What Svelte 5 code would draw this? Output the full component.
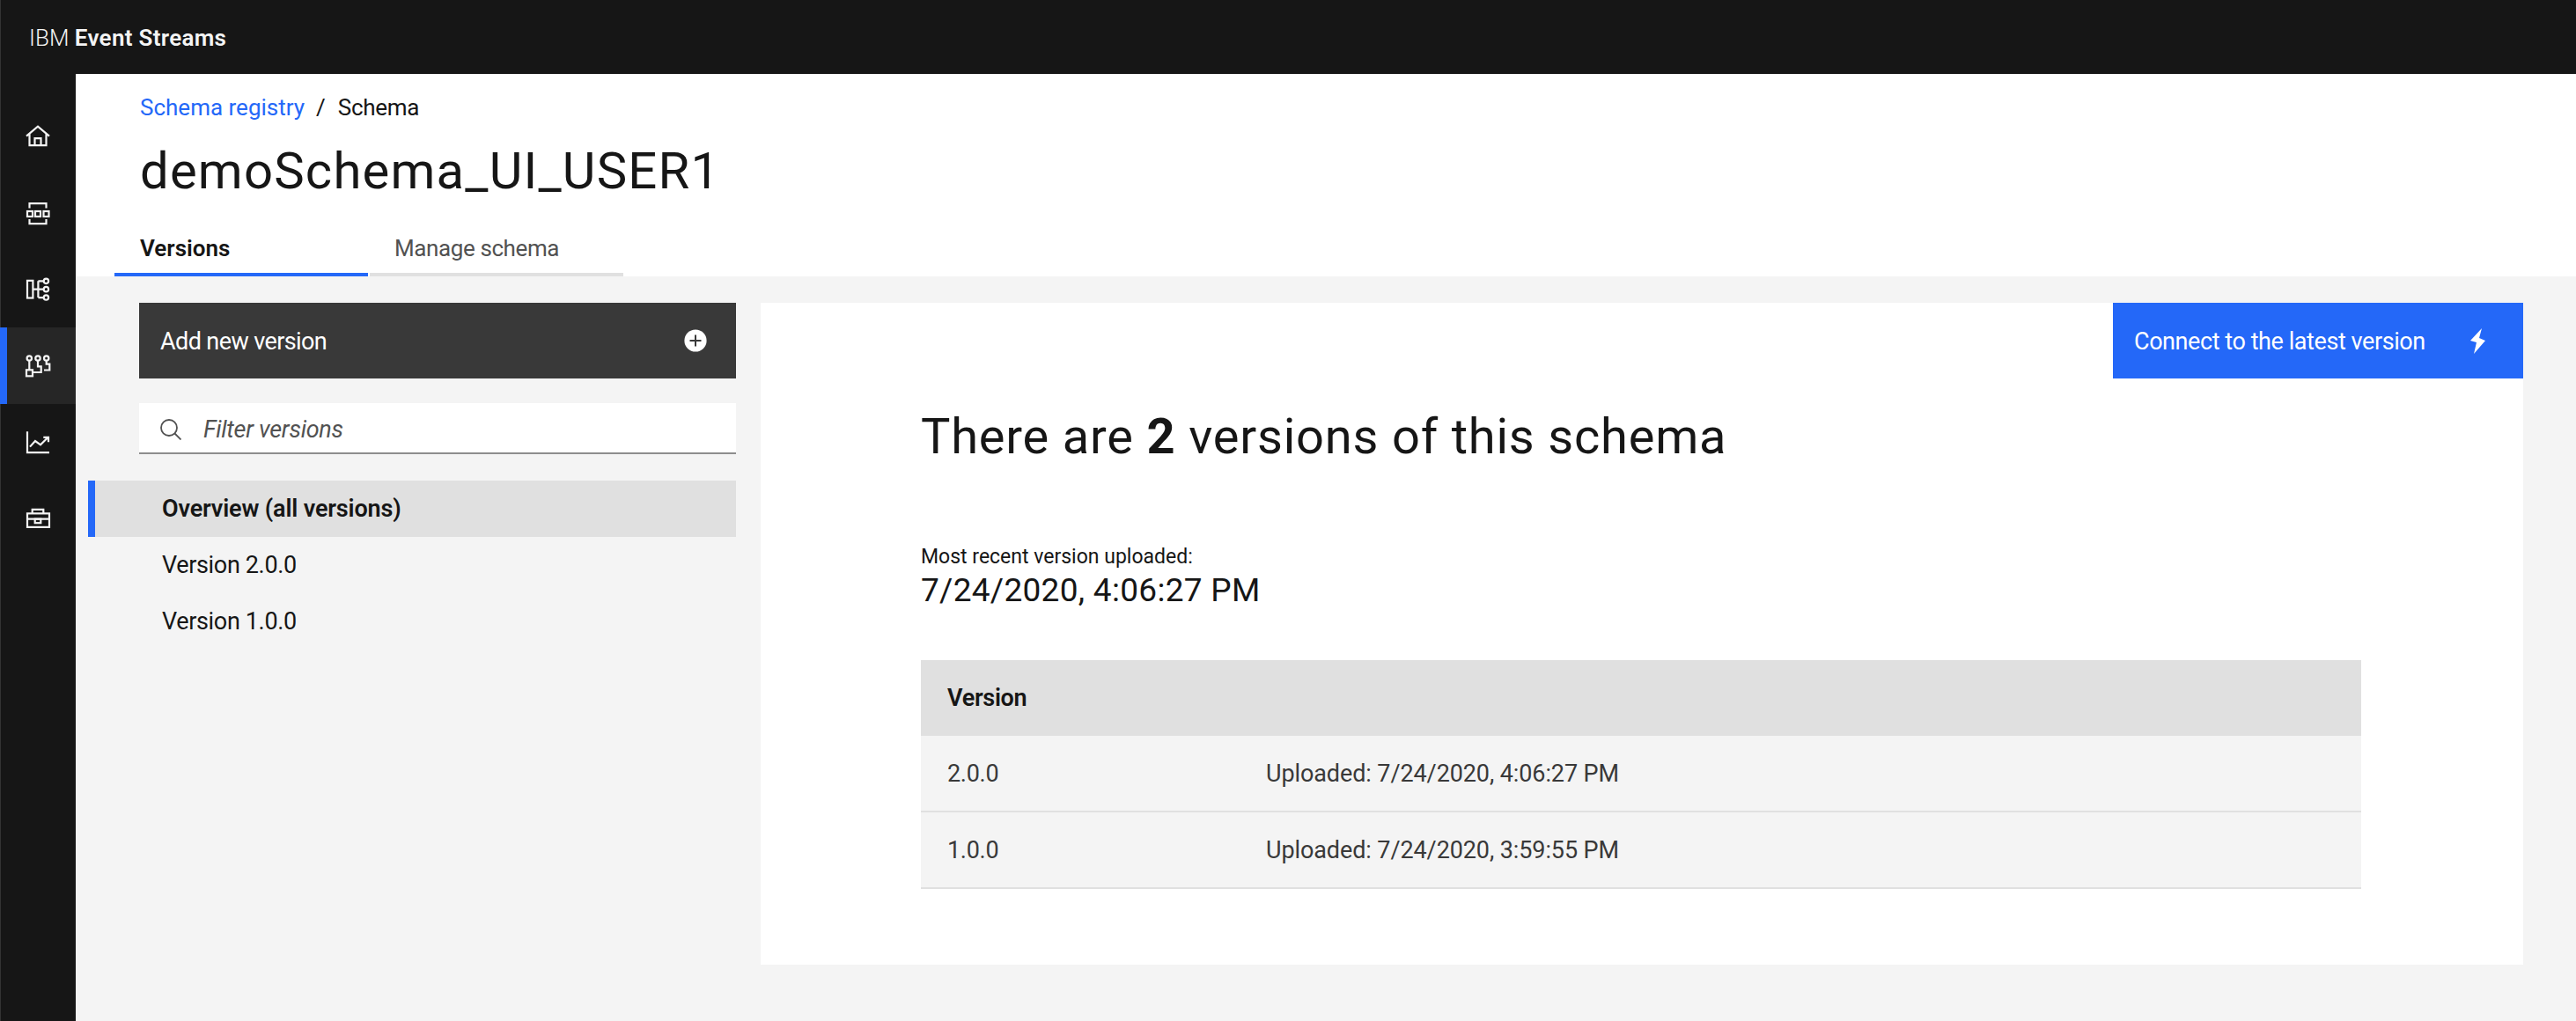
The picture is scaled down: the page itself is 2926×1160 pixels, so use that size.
<script>
  const rows = [
    { v: '2.0.0', u: 'Uploaded: 7/24/2020, 4:06:27 PM' },
    { v: '1.0.0', u: 'Uploaded: 7/24/2020, 3:59:55 PM' }
  ];
</script>

<div class="app">
  <header class="top"><span class="ibm">IBM</span> <span class="product">Event Streams</span></header>
  <div class="below">
    <nav class="side">
      <a class="item" aria-label="Home">
        <svg viewBox="0 2.33 46 46"><path d="M10 25 23 14 36 25M13.5 22.5V35.5H32.5V22.5M19.5 35.5V27.5H26.5V35.5"/></svg>
      </a>
      <a class="item" aria-label="Topics">
        <svg viewBox="0 -1 46 46"><path d="M13.5 16.5V11.2H32.5V16.5M13.5 29V34.2H32.5V29"/><rect x="11" y="20" width="6" height="6"/><rect x="20" y="20" width="6" height="6"/><rect x="29.5" y="20" width="6" height="6"/></svg>
      </a>
      <a class="item" aria-label="Consumer groups">
        <svg viewBox="0 .67 46 46"><rect x="11" y="13.5" width="6.4" height="19.7"/><path d="M17.4 23.3H29.7M23.4 14V32.7M23.4 14H29.7M23.4 32.7H29.7"/><circle cx="32.4" cy="14" r="2.7"/><circle cx="32.4" cy="23.3" r="2.7"/><circle cx="32.4" cy="32.7" r="2.7"/></svg>
      </a>
      <a class="item active" aria-label="Schema registry">
        <svg viewBox="0 0 46 46"><circle cx="13.3" cy="15" r="2.7"/><circle cx="23" cy="15" r="2.7"/><circle cx="32.7" cy="15" r="2.7"/><rect x="10" y="28.3" width="7" height="7"/><path d="M13.3 17.7V28.3M23 17.7V24.3H26.7V31H17M32.7 17.7V21.7H36.3V28.5H30"/></svg>
      </a>
      <a class="item" aria-label="Monitoring">
        <svg viewBox="0 -.33 46 46"><path d="M11 11V34.7H36M14 28.3 20 21.7 26 26 34.7 17.5M29.3 17.5H35V23"/></svg>
      </a>
      <a class="item" aria-label="Toolbox">
        <svg viewBox="0 .33 46 46"><rect x="11" y="17.7" width="25" height="15.5"/><path d="M16.7 17.7V13.2H29.3V17.7M11 24H36"/><rect x="19.7" y="24" width="6.6" height="4.5"/></svg>
      </a>
    </nav>

    <main class="page">
      <section class="head">
        <div class="crumbs"><a class="link">Schema registry</a><span class="sep">/</span><span class="here">Schema</span></div>
        <h1>demoSchema_UI_USER1</h1>
        <div class="tabs">
          <div class="tab on"><span class="tab-versions">Versions</span></div>
          <div class="tab"><span class="tab-manage">Manage schema</span></div>
        </div>
      </section>

      <section class="body">
        <aside class="left">
          <button class="add"><span>Add new version</span>
            <svg class="plus" viewBox="0 0 26 26"><circle cx="13" cy="13" r="12.6" fill="#fff"/><path d="M13 6.5V19.5M6.5 13H19.5" stroke="#393939" stroke-width="2" fill="none"/></svg>
          </button>
          <div class="filter">
            <svg class="glass" viewBox="0 0 24 24"><circle cx="10" cy="10" r="9" /><path d="M16.5 16.5 23.5 23.5"/></svg>
            <span>Filter versions</span>
          </div>
          <ul class="list">
            <li class="sel"><span class="ov">Overview (all versions)</span></li>
            <li><span class="ver">Version 2.0.0</span></li>
            <li><span class="ver">Version 1.0.0</span></li>
          </ul>
        </aside>

        <article class="card">
          <div class="card-top">
            <button class="connect"><span>Connect to the latest version</span>
              <svg class="bolt" viewBox="0 0 17 29"><path d="M13 0 0 14 7 16 4 29 17 14 10 11Z" fill="#fff"/></svg>
            </button>
          </div>
          <div class="content">
            <h2>There are <b>2</b> versions of this schema</h2>
            <p class="label">Most recent version uploaded:</p>
            <p class="date">7/24/2020, 4:06:27 PM</p>
            <div class="table">
              <div class="thead"><span class="th">Version</span></div>
              {#each rows as r}
                <div class="tr"><span class="c1">{r.v}</span><span class="c2">{r.u}</span></div>
              {/each}
            </div>
          </div>
        </article>
      </section>
    </main>
  </div>
</div>

<style>
  :global(body) { margin: 0; background: #f4f4f4; }
  .app { width: 2926px; min-height: 1160px; font-family: Roboto, sans-serif; color: #161616; display: flex; flex-direction: column; }
  .top { height: 84px; background: #161616; color: #f4f4f4; border-left: 1px solid #333; padding-left: 32px; font-size: 26px; line-height: 87px; white-space: pre; box-sizing: border-box; }
  .ibm { font-weight: 300; letter-spacing: 0; }
  .product { font-weight: 600; letter-spacing: 0.3px; }
  .below { display: flex; flex: 1; }
  .side { width: 86px; flex: none; background: #161616; border-left: 1px solid #333; box-sizing: border-box; padding-top: 28px; }
  .item { display: flex; align-items: center; justify-content: center; height: 86.67px; margin-left: -1px; width: 86px; }
  .item.active { background: #262626; box-shadow: inset 8px 0 0 #2468f8; }
  .item svg { width: 46px; height: 46px; fill: none; stroke: #f4f4f4; stroke-width: 2.2; }

  .page { flex: 1; min-width: 0; display: flex; flex-direction: column; }
  .head { background: #fff; height: 230px; position: relative; display: flex; flex-direction: column; padding-left: 73px; box-sizing: border-box; }
  .crumbs { font-size: 26px; line-height: 40px; margin-top: 18px; display: flex; align-items: baseline; letter-spacing: 0; }
  .link { color: #2468f8; }
  .sep { margin: 0 14px 0 13px; }
  .here { letter-spacing: -0.3px; }
  h1 { margin: 20px 0 0; font-size: 58px; font-weight: 400; line-height: 64px; letter-spacing: 1.2px; }
  .tabs { display: flex; gap: 2px; margin: auto 0 0 -29px; }
  .tab { width: 288px; height: 60px; box-sizing: border-box; border-bottom: 4px solid #e0e0e0; padding: 8px 0 0 28px; font-size: 26px; line-height: 40px; color: #525252; letter-spacing: -0.4px; }
  .tab.on { border-bottom-color: #2468f8; color: #161616; font-weight: 600; letter-spacing: 0; padding-left: 29px; }

  .body { flex: 1; display: flex; gap: 28px; padding: 30px 60px 0 14px; }
  .left { width: 736px; flex: none; }
  .add { display: flex; align-items: center; justify-content: space-between; width: 678px; height: 86px; margin-left: 58px; background: #393939; color: #fff; border: 0; padding: 2px 33px 0 24px; box-sizing: border-box; font: inherit; font-size: 27px; letter-spacing: -0.6px; }
  .plus { width: 26px; height: 26px; margin-top: -2px; }
  .filter { display: flex; align-items: center; width: 678px; height: 58px; margin: 28px 0 0 58px; padding: 3px 0 0 24px; box-sizing: border-box; background: #fff; border-bottom: 2px solid #8d8d8d; font-size: 27px; font-style: italic; color: #525252; letter-spacing: -0.3px; }
  .glass { width: 24px; height: 24px; margin-right: 25px; fill: none; stroke: #525252; stroke-width: 1.8; flex: none; }
  .list { list-style: none; margin: 30px 0 0; padding: 0; }
  .list li { height: 64px; line-height: 65px; padding-left: 84px; font-size: 27px; letter-spacing: -0.35px; }
  .list li.sel { background: #e0e0e0; box-shadow: inset 8px 0 0 #2468f8; font-weight: 600; letter-spacing: -0.15px; line-height: 64px; }

  .card { flex: 1; height: 752px; background: #fff; }
  .card-top { display: flex; justify-content: flex-end; }
  .connect { display: flex; align-items: center; width: 466px; height: 86px; background: #2468f8; color: #fff; border: 0; padding: 2px 43px 0 24px; justify-content: space-between; box-sizing: border-box; font: inherit; font-size: 27px; letter-spacing: -0.43px; }
  .bolt { width: 17px; height: 29px; margin-top: -2px; }
  .content { padding: 30px 184px 0 182px; }
  h2 { margin: 0; font-size: 56px; font-weight: 400; line-height: 72px; letter-spacing: 0.8px; }
  h2 b { font-weight: 700; }
  .label { margin: 87px 0 0; font-size: 23px; line-height: 28px; letter-spacing: 0; }
  .date { margin: 0; font-size: 37px; font-weight: 400; line-height: 48px; letter-spacing: 0.3px; }
  .table { margin-top: 55px; }
  .thead { height: 86px; background: #e0e0e0; display: flex; align-items: center; padding-left: 30px; font-size: 27px; font-weight: 600; letter-spacing: -0.3px; }
  .tr { height: 87px; background: #f4f4f4; border-bottom: 2px solid #e0e0e0; box-sizing: border-box; display: flex; align-items: center; padding-left: 30px; font-size: 27px; color: #393939; letter-spacing: -0.3px; }
  .c1 { width: 362px; flex: none; }
  .c2 { letter-spacing: -0.1px; }
</style>
